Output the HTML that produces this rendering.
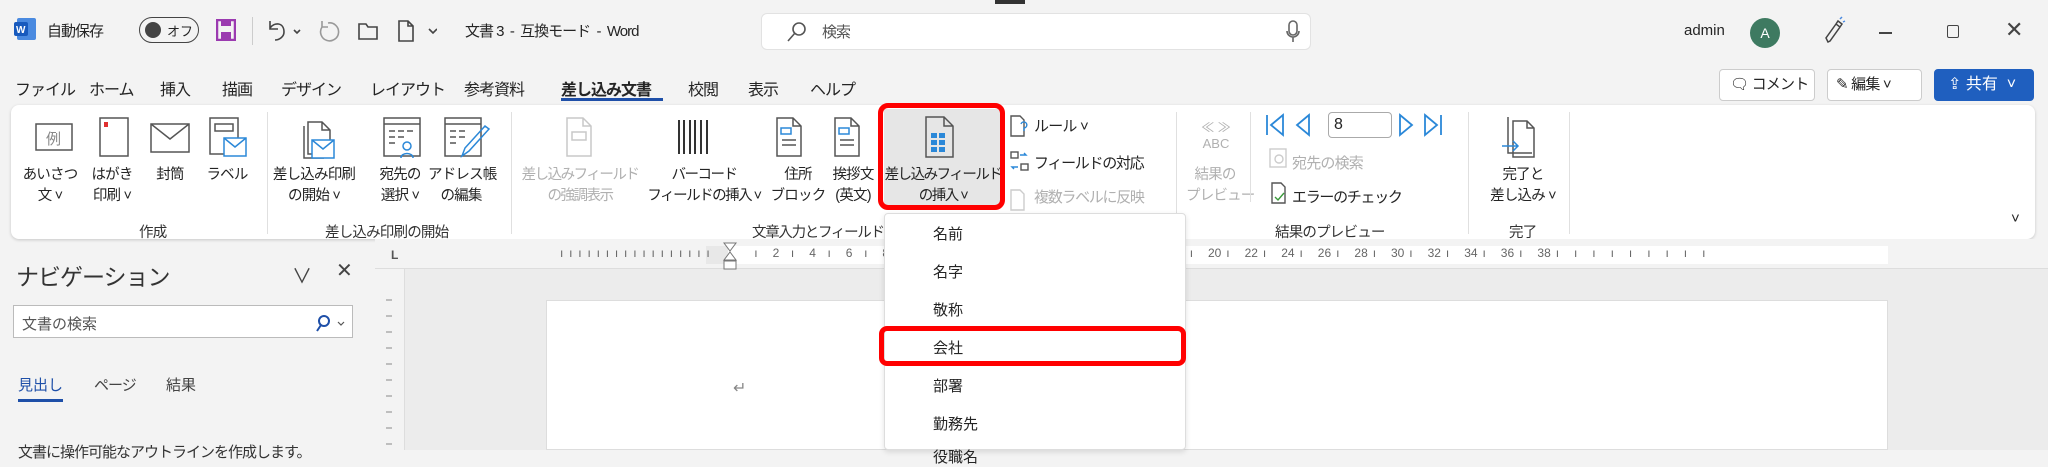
<!DOCTYPE html>
<html><head><meta charset="utf-8"><style>
*{margin:0;padding:0;box-sizing:border-box}
body{width:2048px;height:450px;overflow:hidden;background:#f3f3f3;font-family:"Liberation Sans","Noto Sans CJK JP",sans-serif;color:#242424;position:relative}
.a{position:absolute;white-space:nowrap}
.t{font-size:16px;letter-spacing:-1px}
.lb{font-size:14.5px;text-align:center;line-height:21px;letter-spacing:-0.8px}
.g{color:#b0b0b0}
.gl{font-size:14.5px;color:#333;letter-spacing:-0.8px}
.sep{position:absolute;width:1px;background:#e0e0e0;top:112px;height:122px}
.mi{position:absolute;left:933px;font-size:15px}
.sm{font-size:15px;letter-spacing:-0.8px}
</style></head><body>
<!-- title bar -->
<div class="a" style="left:995px;top:0;width:30px;height:4px;background:#333"></div>
<svg class="a" style="left:14px;top:18px" width="22" height="22"><rect x="3" y="0" width="19" height="22" rx="2" fill="#4a8ae0"/><rect x="0" y="4" width="14" height="14" rx="2" fill="#185abd"/><text x="2" y="15" font-size="10" fill="#fff" font-weight="bold" font-family="Liberation Sans">W</text></svg>
<div class="a t" style="left:47px;top:20px;font-size:15px">自動保存</div>
<div class="a" style="left:139px;top:17px;width:60px;height:26px;border:1.5px solid #444;border-radius:13px"></div>
<div class="a" style="left:145px;top:22px;width:16px;height:16px;border-radius:50%;background:#444"></div>
<div class="a" style="left:167px;top:21px;font-size:13px">オフ</div>
<svg class="a" style="left:216px;top:19px" width="20" height="22"><rect x="1" y="1" width="18" height="20" fill="none" stroke="#9b3ab0" stroke-width="2.5"/><rect x="5" y="1" width="10" height="6" fill="#9b3ab0"/><rect x="5" y="13" width="10" height="8" fill="#9b3ab0"/></svg>
<div class="a" style="left:252px;top:17px;width:1px;height:28px;background:#ccc"></div>
<svg class="a" style="left:266px;top:18px" width="90" height="24" fill="none" stroke="#444" stroke-width="1.6"><path d="M4 3v8h8M4 10c4-6 14-6 14 4 0 5-5 8-9 8"/><path d="M28 12l3 3 3-3"/><path d="M62 5a9 9 0 1 1-6 4M56 3v6h6" stroke="#999"/></svg>
<svg class="a" style="left:357px;top:19px" width="80" height="24" fill="none" stroke="#444" stroke-width="1.6"><path d="M2 5h7l2 3h9v12H2z"/><path d="M42 2h9l5 5v15H42z M51 2v5h5"/><path d="M72 10l4 4 4-4"/></svg>
<div class="a t" style="left:465px;top:20px;font-size:15px">文書 3&nbsp; - &nbsp;互換モード&nbsp; - &nbsp;Word</div>
<div class="a" style="left:761px;top:13px;width:550px;height:37px;background:#fff;border:1px solid #e2e2e2;border-radius:6px"></div>
<svg class="a" style="left:786px;top:21px" width="22" height="22" fill="none" stroke="#555" stroke-width="1.6"><circle cx="13" cy="8" r="6"/><path d="M9 12l-7 8"/></svg>
<div class="a t" style="left:822px;top:21px;color:#555;font-size:15px">検索</div>
<svg class="a" style="left:1286px;top:20px" width="14" height="24" fill="none" stroke="#666" stroke-width="1.6"><rect x="3" y="1" width="8" height="14" rx="4"/><path d="M1 11a6 6 0 0 0 12 0M7 17v5"/></svg>
<div class="a" style="left:1684px;top:22px;font-size:15px">admin</div>
<div class="a" style="left:1750px;top:18px;width:30px;height:30px;border-radius:50%;background:#3e7a61;color:#fff;font-size:14px;text-align:center;line-height:30px">A</div>
<svg class="a" style="left:1822px;top:16px" width="24" height="30" fill="none" stroke="#444" stroke-width="1.5"><path d="M6 26l-2-4 10-14 4 3-10 14z M14 8l2-3 4 3-2 3"/><path d="M18 3l2-2M21 6l2-1" stroke="#4a8ae0"/></svg>
<div class="a" style="left:1879px;top:32px;width:13px;height:1.5px;background:#444"></div>
<div class="a" style="left:1947px;top:25px;width:12px;height:13px;border:1.5px solid #444;border-radius:2px"></div>
<div class="a" style="left:2005px;top:17px;font-size:22px;color:#444">✕</div>
<!-- tabs -->
<div class="a t" style="left:15px;top:76px">ファイル</div>
<div class="a t" style="left:89px;top:76px">ホーム</div>
<div class="a t" style="left:160px;top:76px">挿入</div>
<div class="a t" style="left:222px;top:76px">描画</div>
<div class="a t" style="left:281px;top:76px">デザイン</div>
<div class="a t" style="left:370px;top:76px">レイアウト</div>
<div class="a t" style="left:464px;top:76px">参考資料</div>
<div class="a t" style="left:561px;top:76px;font-weight:bold">差し込み文書</div>
<div class="a" style="left:561px;top:98px;width:102px;height:3px;background:#1e4fa8"></div>
<div class="a t" style="left:688px;top:76px">校閲</div>
<div class="a t" style="left:748px;top:76px">表示</div>
<div class="a t" style="left:810px;top:76px">ヘルプ</div>
<div class="a sm" style="left:1719px;top:69px;width:96px;height:32px;background:#fff;border:1px solid #ccc;border-radius:4px;line-height:30px;padding-left:10px">🗨︎ コメント</div>
<div class="a sm" style="left:1827px;top:69px;width:95px;height:32px;background:#fff;border:1px solid #ccc;border-radius:4px;line-height:30px;padding-left:8px">✎ 編集 ˅</div>
<div class="a" style="left:1934px;top:69px;width:100px;height:32px;background:#1f5fbf;border-radius:4px;font-size:16px;line-height:32px;padding-left:14px;color:#fff">⇪ 共有 &nbsp;˅</div>
<!-- ribbon -->
<div class="a" style="left:11px;top:105px;width:2024px;height:134px;background:#fff;border-radius:8px;box-shadow:0 1px 3px rgba(0,0,0,.18)"></div>
<svg class="a" style="left:30px;top:116px" width="250" height="44" fill="none" stroke="#555" stroke-width="1.5">
<rect x="6" y="8" width="36" height="26"/><text x="16" y="28" font-size="15" fill="#888" stroke="none">例</text>
<rect x="70" y="2" width="28" height="38"/><rect x="74" y="6" width="4" height="5" fill="#e03030" stroke="none"/>
<rect x="121" y="8" width="38" height="28"/><path d="M121 8l19 15 19-15"/>
<rect x="180" y="2" width="28" height="36"/><rect x="185" y="8" width="18" height="7"/><rect x="194" y="22" width="22" height="18" fill="#fff" stroke="#2b88d8"/><path d="M194 22l11 9 11-9" stroke="#2b88d8"/></svg>
<div class="a lb" style="left:20px;top:165px;width:60px">あいさつ<br>文 ˅</div>
<div class="a lb" style="left:84px;top:165px;width:56px">はがき<br>印刷 ˅</div>
<div class="a lb" style="left:145px;top:165px;width:50px">封筒</div>
<div class="a lb" style="left:200px;top:165px;width:54px">ラベル</div>
<div class="a gl" style="left:139px;top:221px">作成</div>
<div class="sep" style="left:267px"></div>
<svg class="a" style="left:290px;top:116px" width="210" height="44" fill="none" stroke="#555" stroke-width="1.5">
<path d="M18 6h14l8 8v24H18z M32 6v8h8"/><path d="M14 10v32h20"/><rect x="22" y="24" width="22" height="18" fill="#fff" stroke="#2b88d8"/><path d="M22 24l11 9 11-9" stroke="#2b88d8"/>
<rect x="94" y="2" width="36" height="38"/><path d="M94 8h36M99 15h6M108 15h6M117 15h6M99 21h6M108 21h6M99 27h6"/><circle cx="117" cy="30" r="4" stroke="#2b88d8"/><path d="M111 42c0-6 12-6 12 0" stroke="#2b88d8"/>
<rect x="155" y="2" width="36" height="38"/><path d="M155 8h36M160 15h6M169 15h6M160 21h6M169 21h6M160 27h6"/><path d="M172 40l3-8 20-22 4 3-20 22z" stroke="#2b88d8"/></svg>
<div class="a lb" style="left:272px;top:165px;width:84px">差し込み印刷<br>の開始 ˅</div>
<div class="a lb" style="left:370px;top:165px;width:60px">宛先の<br>選択 ˅</div>
<div class="a lb" style="left:428px;top:165px;width:66px">アドレス帳<br>の編集</div>
<div class="a gl" style="left:325px;top:221px">差し込み印刷の開始</div>
<div class="sep" style="left:511px"></div>
<svg class="a" style="left:555px;top:116px" width="340" height="44" fill="none" stroke="#555" stroke-width="1.5">
<path d="M12 2h16l8 8v30H12z M28 2v8h8" stroke="#c8c8c8"/><rect x="17" y="16" width="14" height="8" stroke="#c8c8c8"/>
<g stroke="#333" stroke-width="2"><path d="M124 4v34M129 4v34M135 4v34M140 4v34M146 4v34M152 4v34"/></g>
<path d="M222 2h16l8 8v30H222z M238 2v8h8"/><rect x="226" y="12" width="10" height="6" stroke="#2b88d8"/><path d="M227 24h14M227 29h14"/>
<path d="M280 2h16l8 8v30H280z M296 2v8h8"/><rect x="284" y="12" width="10" height="6" stroke="#2b88d8"/><path d="M285 24h14M285 29h14"/></svg>
<div class="a lb g" style="left:518px;top:165px;width:124px;letter-spacing:-1.5px">差し込みフィールド<br>の強調表示</div>
<div class="a lb" style="left:643px;top:165px;width:122px;letter-spacing:-1.5px">バーコード<br>フィールドの挿入 ˅</div>
<div class="a lb" style="left:770px;top:165px;width:56px">住所<br>ブロック</div>
<div class="a lb" style="left:826px;top:165px;width:54px">挨拶文<br>(英文)</div>
<div class="a" style="left:884px;top:109px;width:116px;height:96px;background:#e6e6e6"></div>
<svg class="a" style="left:922px;top:115px" width="36" height="44" fill="none" stroke="#555" stroke-width="1.5"><path d="M4 2h18l9 9v31H4z M22 2v9h9"/><g fill="#2b88d8" stroke="none"><rect x="9" y="18" width="6" height="5"/><rect x="17" y="18" width="6" height="5"/><rect x="9" y="25" width="6" height="5"/><rect x="17" y="25" width="6" height="5"/><rect x="9" y="32" width="6" height="5"/><rect x="17" y="32" width="6" height="5"/></g></svg>
<div class="a lb" style="left:882px;top:165px;width:122px;letter-spacing:-1.5px">差し込みフィールド<br>の挿入 ˅</div>
<div class="a" style="left:878px;top:103px;width:127px;height:107px;border:5px solid #ff0000;border-radius:10px"></div>
<svg class="a" style="left:1009px;top:114px" width="22" height="100" fill="none" stroke="#555" stroke-width="1.4"><path d="M2 2h9l4 4v16H2z"/><path d="M12 10a3 3 0 1 1 3 4v3" stroke="#2b88d8"/><rect x="2" y="38" width="7" height="6"/><rect x="12" y="50" width="7" height="6"/><path d="M11 41h6l-2-2M9 53H3l2 2" stroke="#2b88d8"/><path d="M2 76h9l4 4v16H2z" stroke="#ccc"/></svg>
<div class="a sm" style="left:1034px;top:115px">ルール ˅</div>
<div class="a sm" style="left:1034px;top:152px;letter-spacing:-1.3px">フィールドの対応</div>
<div class="a sm g" style="left:1034px;top:186px;letter-spacing:-1.3px">複数ラベルに反映</div>
<div class="a gl" style="left:752px;top:221px;letter-spacing:-1.3px">文章入力とフィールド</div>
<div class="sep" style="left:1176px"></div>
<div class="a g" style="left:1196px;top:117px;font-size:13px;width:40px;text-align:center">≪ ≫<br>ABC</div>
<div class="a lb g" style="left:1186px;top:165px;width:58px">結果の<br>プレビュー</div>
<div class="sep" style="left:1250px;top:112px;height:90px"></div>
<svg class="a" style="left:1265px;top:112px" width="200" height="26" fill="none" stroke="#2b88d8" stroke-width="1.8"><path d="M2 3v20M18 3L6 13l12 10z"/><path d="M44 3L32 13l12 10z"/><path d="M135 3l12 10-12 10z"/><path d="M160 3l12 10-12 10zM176 3v20"/></svg>
<div class="a" style="left:1328px;top:112px;width:64px;height:26px;border:1.5px solid #aaa;border-radius:4px;font-size:16px;line-height:23px;padding-left:5px">8</div>
<svg class="a" style="left:1268px;top:147px" width="22" height="60" fill="none" stroke-width="1.4"><rect x="2" y="2" width="16" height="18" stroke="#ccc"/><circle cx="11" cy="12" r="4" stroke="#ccc"/><path d="M4 36h9l4 4v16H4z" stroke="#555"/><path d="M7 50l3 3 6-7" stroke="#3a9a3a"/></svg>
<div class="a sm g" style="left:1292px;top:152px">宛先の検索</div>
<div class="a sm" style="left:1292px;top:186px;letter-spacing:-1.3px">エラーのチェック</div>
<div class="a gl" style="left:1275px;top:221px">結果のプレビュー</div>
<div class="sep" style="left:1468px"></div>
<svg class="a" style="left:1500px;top:115px" width="40" height="46" fill="none" stroke="#555" stroke-width="1.5"><path d="M8 2v36h24"/><path d="M13 6h14l7 7v29H13z M27 6v7h7"/><path d="M2 31h16M13 26l5 5-5 5" stroke="#2b88d8"/></svg>
<div class="a lb" style="left:1488px;top:165px;width:70px">完了と<br>差し込み ˅</div>
<div class="a gl" style="left:1509px;top:221px">完了</div>
<div class="sep" style="left:1569px"></div>
<div class="a" style="left:2011px;top:210px;font-size:15px">˅</div>
<!-- nav pane -->
<div class="a" style="left:16px;top:258px;font-size:23px;color:#333;letter-spacing:-1px">ナビゲーション</div>
<div class="a" style="left:292px;top:260px;font-size:20px;color:#444">∨</div>
<div class="a" style="left:336px;top:258px;font-size:20px;color:#444">✕</div>
<div class="a" style="left:13px;top:305px;width:340px;height:33px;background:#fff;border:1px solid #bbb"></div>
<div class="a" style="left:22px;top:313px;font-size:15px;color:#555">文書の検索</div>
<svg class="a" style="left:315px;top:314px" width="32" height="18" fill="none" stroke="#1e4fa8" stroke-width="2"><circle cx="9" cy="7" r="5"/><path d="M6 11l-4 6"/><path d="M23 8l3 3 3-3" stroke="#555" stroke-width="1.2"/></svg>
<div class="a" style="left:18px;top:374px;font-size:15px;color:#1e4fa8">見出し</div>
<div class="a" style="left:18px;top:399px;width:45px;height:3px;background:#1e4fa8"></div>
<div class="a" style="left:94px;top:374px;font-size:15px;color:#444;letter-spacing:-1px">ページ</div>
<div class="a" style="left:166px;top:374px;font-size:15px;color:#444">結果</div>
<div class="a" style="left:18px;top:441px;font-size:15px;color:#333;letter-spacing:-1px">文書に操作可能なアウトラインを作成します。</div>
<!-- doc area -->
<div class="a" style="left:375px;top:239px;width:1673px;height:211px;background:#ececec"></div>
<div class="a" style="left:375px;top:239px;width:1673px;height:30px;background:#f3f3f3;border-bottom:1px solid #ddd"></div>
<div class="a" style="left:375px;top:269px;width:30px;height:181px;background:#f3f3f3;border-right:1px solid #ddd"></div>
<div class="a" style="left:391px;top:248px;font-size:12px;font-weight:bold;color:#555">L</div>
<div class="a" style="left:706px;top:246px;width:1182px;height:18px;background:#fff"></div>
<div class="a" style="left:706px;top:246px;width:22px;height:18px;background:#e8e8e8"></div>
<div class="a" id="rul" style="left:0;top:246px;font-size:12px;color:#666"></div>
<svg class="a" style="left:722px;top:242px" width="16" height="30" fill="#fff" stroke="#777" stroke-width="1"><path d="M2 1h12l-6 8z"/><path d="M8 10l6 8H2z"/><rect x="2" y="19" width="12" height="8"/></svg>
<div class="a" style="left:546px;top:300px;width:1342px;height:150px;background:#fff;border:1px solid #ddd"></div>
<div class="a" style="left:733px;top:378px;font-size:16px;color:#888">↵</div>
<!-- dropdown -->
<div class="a" style="left:884px;top:213px;width:302px;height:237px;background:#fff;border:1px solid #ddd;border-radius:4px;box-shadow:0 2px 6px rgba(0,0,0,.12)"></div>
<div class="mi" style="top:223px">名前</div>
<div class="mi" style="top:261px">名字</div>
<div class="mi" style="top:299px">敬称</div>
<div class="mi" style="top:337px">会社</div>
<div class="mi" style="top:375px">部署</div>
<div class="mi" style="top:413px">勤務先</div>
<div class="mi" style="top:446px">役職名</div>
<div class="a" style="left:879px;top:326px;width:307px;height:40px;border:5px solid #ff0000;border-radius:8px"></div>
<svg class="a" style="left:380px;top:290px" width="20" height="160" stroke="#888" stroke-width="1"><path d="M6 10h6M6 26h6M6 42h6M6 58h6M6 74h6M6 90h6M6 106h6M6 122h6M6 138h6M6 154h6"/></svg>
<script>
var r=document.getElementById('rul'),s='';
function sp(x,t){s+='<span style="position:absolute;left:'+x+'px">'+t+'</span>';}
for(var i=0;i<16;i++)sp(708+i*-9.15+0,'');
for(var i=0;i<17;i++)sp(560+i*9.15,'ı');
for(var n=1;n<=9;n++){sp(736+n*18.3,n%2==0?n:'ı');}
for(var n=19;n<=47;n++){var x=1208+(n-20)*18.3;sp(x,(n%2==0&&n<=38)?n:'ı');}
r.innerHTML=s;
</script>
</body></html>
